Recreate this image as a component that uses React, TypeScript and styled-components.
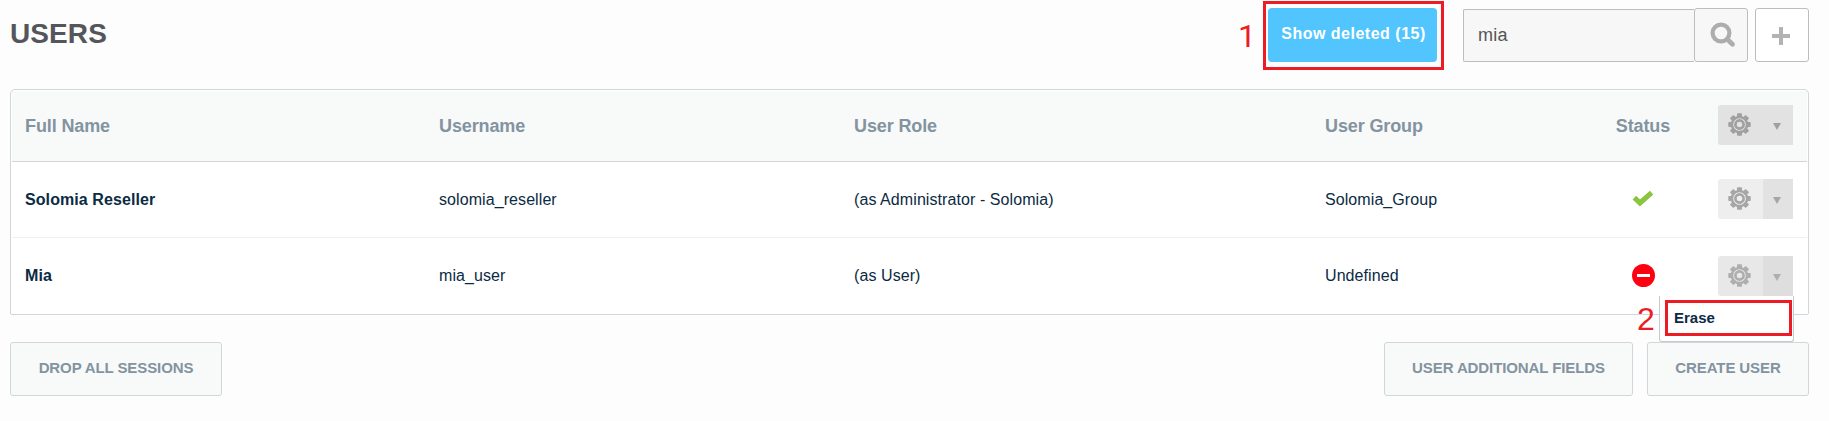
import React from "react";
import styled, { createGlobalStyle } from "styled-components";

const GlobalStyle = createGlobalStyle`
  * { box-sizing: border-box; }
  body {
    margin: 0;
    background: #fdfdfd;
    font-family: "Liberation Sans", Arial, sans-serif;
    color: #0b2a43;
  }
  button, input { font-family: inherit; margin: 0; }
  svg { display: block; }
`;

const Page = styled.div`
  width: 1829px;
  height: 421px;
  padding: 8px 20px 0 10px;
  overflow: hidden;
`;

const Toolbar = styled.header`
  display: flex;
  align-items: flex-start;
  height: 81px;
`;

const Title = styled.h1`
  margin: 10px auto 0 0;
  font-size: 28px;
  line-height: 32px;
  font-weight: 700;
  letter-spacing: 0.1px;
  color: #54565b;
`;

const Highlight = styled.div`
  position: relative;
  margin-right: 26px;
  &::after {
    content: "";
    position: absolute;
    inset: -7px -7px -8px -5px;
    border: 3px solid #ed1c24;
  }
`;

const StepNumber = styled.span<{ $left: number; $top: number; $font?: string }>`
  position: absolute;
  left: ${(p) => p.$left}px;
  top: ${(p) => p.$top}px;
  font-family: ${(p) => p.$font ?? '"Liberation Sans"'}, sans-serif;
  font-size: 32px;
  font-weight: 400;
  line-height: 36px;
  color: #ed1c24;
`;

const ShowDeleted = styled.button`
  display: block;
  width: 169px;
  height: 54px;
  padding: 0 0 3px 2px;
  border: 0;
  border-radius: 4px;
  background: #52c5ff;
  color: #fff;
  font-size: 16px;
  font-weight: 700;
  letter-spacing: 0.5px;
  white-space: nowrap;
`;

const SearchInput = styled.input`
  width: 231px;
  height: 53px;
  margin-top: 1px;
  padding: 0 13px 1px 14px;
  border: 1px solid #bdbdbd;
  border-right: 0;
  border-radius: 2px 0 0 2px;
  background: #f7f7f7;
  color: #555;
  font-size: 18px;
  letter-spacing: 0.2px;
  outline: 0;
`;

const SquareButton = styled.button<{ $bg: string; $gap?: number; $pad?: string }>`
  display: flex;
  align-items: center;
  justify-content: center;
  width: 54px;
  height: 54px;
  margin-left: ${(p) => p.$gap ?? 0}px;
  padding: ${(p) => p.$pad ?? "0"};
  border: 1px solid #bdbdbd;
  border-radius: 3px;
  background: ${(p) => p.$bg};
`;

const Table = styled.section`
  width: 1799px;
  height: 226px;
  padding: 1px;
  border: 1px solid #d0d6da;
  border-radius: 5px 5px 2px 2px;
  background: #fff;
`;

const Row = styled.div<{ $head?: boolean; $height: number; $line?: string }>`
  display: grid;
  grid-template-columns: 414px 415px 471px 275px 86px 1fr;
  align-items: center;
  height: ${(p) => p.$height}px;
  padding-left: 13px;
  border-bottom: ${(p) => (p.$line ? `1px solid ${p.$line}` : "0")};
  background: ${(p) => (p.$head ? "#f8faf9" : "transparent")};
  color: ${(p) => (p.$head ? "#8393a0" : "inherit")};
  font-size: ${(p) => (p.$head ? 18 : 16)}px;
  font-weight: ${(p) => (p.$head ? 700 : 400)};
  letter-spacing: ${(p) => (p.$head ? -0.12 : 0.08)}px;
`;

const Cell = styled.div<{ $bold?: boolean }>`
  white-space: nowrap;
  font-weight: ${(p) => (p.$bold ? 700 : "inherit")};
`;

const StatusCell = styled.div<{ $lift?: number }>`
  display: flex;
  justify-content: center;
  padding-bottom: ${(p) => p.$lift ?? 0}px;
`;

const ActionGroup = styled.div<{ $lift?: number }>`
  position: relative;
  display: flex;
  width: 75px;
  height: 40px;
  margin-left: 32px;
  margin-bottom: ${(p) => p.$lift ?? 0}px;
`;

const GearButton = styled.button<{ $bg: string }>`
  display: flex;
  align-items: center;
  justify-content: center;
  width: 45px;
  padding: 0 2px 1px 0;
  border: 0;
  border-radius: 3px 0 0 3px;
  background: ${(p) => p.$bg};
`;

const ArrowButton = styled.button<{ $bg: string }>`
  display: flex;
  align-items: center;
  justify-content: center;
  width: 30px;
  padding: 3px 3px 0 0;
  border: 0;
  background: ${(p) => p.$bg};
`;

const Menu = styled.div`
  position: absolute;
  top: 40px;
  right: -1px;
  width: 135px;
  height: 46px;
  padding: 4px 2px 0 5px;
  border: 1px solid #c3cad0;
  border-top: 0;
  border-radius: 0 0 3px 3px;
  background: #fff;
  letter-spacing: 0;
  z-index: 2;
`;

const MenuItem = styled.div`
  width: 127px;
  height: 36px;
  padding-left: 6px;
  border: 3px solid #ed1c24;
  font-size: 15px;
  font-weight: 700;
  line-height: 30px;
`;

const Footer = styled.footer`
  display: flex;
  gap: 14px;
  margin-top: 27px;
`;

const FooterButton = styled.button<{ $width: number; $first?: boolean }>`
  width: ${(p) => p.$width}px;
  height: 54px;
  margin-right: ${(p) => (p.$first ? "auto" : "0")};
  padding: 0 0 3px;
  border: 1px solid #d0d6da;
  border-radius: 3px;
  background: #f8faf9;
  color: #8393a0;
  font-size: 15px;
  font-weight: 700;
  letter-spacing: -0.1px;
  white-space: nowrap;
`;

const Gear = ({ color }: { color: string }) => (
  <svg width="23" height="23" viewBox="-11.5 -11.5 23 23">
    <circle r="7.6" fill="none" stroke={color} strokeWidth="2.5" />
    <circle r="4.1" fill="none" stroke={color} strokeWidth="2.7" />
    {[0, 45, 90, 135, 180, 225, 270, 315].map((a) => (
      <rect key={a} x="-2.5" y="-11.2" width="5" height="3.6" rx="0.8" fill={color} transform={`rotate(${a})`} />
    ))}
  </svg>
);

interface ActionsProps {
  left: string;
  right: string;
  icon: string;
  lift?: number;
  children?: React.ReactNode;
}

const Actions = ({ left, right, icon, lift, children }: ActionsProps) => (
  <ActionGroup $lift={lift}>
    <GearButton $bg={left}>
      <Gear color={icon} />
    </GearButton>
    <ArrowButton $bg={right}>
      <svg width="8" height="7" viewBox="0 0 8 7">
        <path d="M0 0H8L4 7Z" fill={icon} />
      </svg>
    </ArrowButton>
    {children}
  </ActionGroup>
);

const ActiveIcon = () => (
  <svg width="22" height="17" viewBox="0 0 22 17">
    <path d="M2.4 7.6L8 13L19.6 2.6" fill="none" stroke="#8bc540" strokeWidth="5.2" />
  </svg>
);

const BlockedIcon = () => (
  <svg width="23" height="23" viewBox="0 0 23 23">
    <circle cx="11.5" cy="11.5" r="11.5" fill="#ff0010" />
    <rect x="5" y="10" width="13" height="3" fill="#fff" />
  </svg>
);

export default function App() {
  return (
    <>
      <GlobalStyle />
      <Page>
        <Toolbar>
          <Title>USERS</Title>
          <Highlight>
            <StepNumber $left={-30} $top={10} $font="Roboto">1</StepNumber>
            <ShowDeleted>Show deleted (15)</ShowDeleted>
          </Highlight>
          <SearchInput defaultValue="mia" />
          <SquareButton $bg="#f7f7f7" $pad="0 0 0 3px">
            <svg width="26" height="26" viewBox="0 0 26 26">
              <circle cx="11" cy="11" r="8.4" fill="none" stroke="#adadad" strokeWidth="4.2" />
              <path d="M17.5 17.5L22.5 22.3" stroke="#adadad" strokeWidth="4.8" strokeLinecap="round" />
            </svg>
          </SquareButton>
          <SquareButton $bg="#fff" $gap={7} $pad="2px 2px 0 0">
            <svg width="18" height="18" viewBox="0 0 18 18">
              <path d="M9 0V18M0 9H18" stroke="#b3b3b3" strokeWidth="4" />
            </svg>
          </SquareButton>
        </Toolbar>

        <Table>
          <Row $head $height={71} $line="#d0d6da">
            <Cell>Full Name</Cell>
            <Cell>Username</Cell>
            <Cell>User Role</Cell>
            <Cell>User Group</Cell>
            <StatusCell>Status</StatusCell>
            <Actions left="#e2e2e2" right="#e2e2e2" icon="#a0a0a0" lift={2} />
          </Row>
          <Row $height={76} $line="#eef0f1">
            <Cell $bold>Solomia Reseller</Cell>
            <Cell>solomia_reseller</Cell>
            <Cell>(as Administrator - Solomia)</Cell>
            <Cell>Solomia_Group</Cell>
            <StatusCell $lift={2}><ActiveIcon /></StatusCell>
            <Actions left="#eeeeee" right="#e2e2e2" icon="#a6a6a6" lift={1} />
          </Row>
          <Row $height={76}>
            <Cell $bold>Mia</Cell>
            <Cell>mia_user</Cell>
            <Cell>(as User)</Cell>
            <Cell>Undefined</Cell>
            <StatusCell $lift={1}><BlockedIcon /></StatusCell>
            <Actions left="#e8e8e8" right="#dedede" icon="#aeaeae">
              <Menu>
                <StepNumber $left={-23} $top={5}>2</StepNumber>
                <MenuItem>Erase</MenuItem>
              </Menu>
            </Actions>
          </Row>
        </Table>

        <Footer>
          <FooterButton $width={212} $first>DROP ALL SESSIONS</FooterButton>
          <FooterButton $width={249}>USER ADDITIONAL FIELDS</FooterButton>
          <FooterButton $width={162}>CREATE USER</FooterButton>
        </Footer>
      </Page>
    </>
  );
}
